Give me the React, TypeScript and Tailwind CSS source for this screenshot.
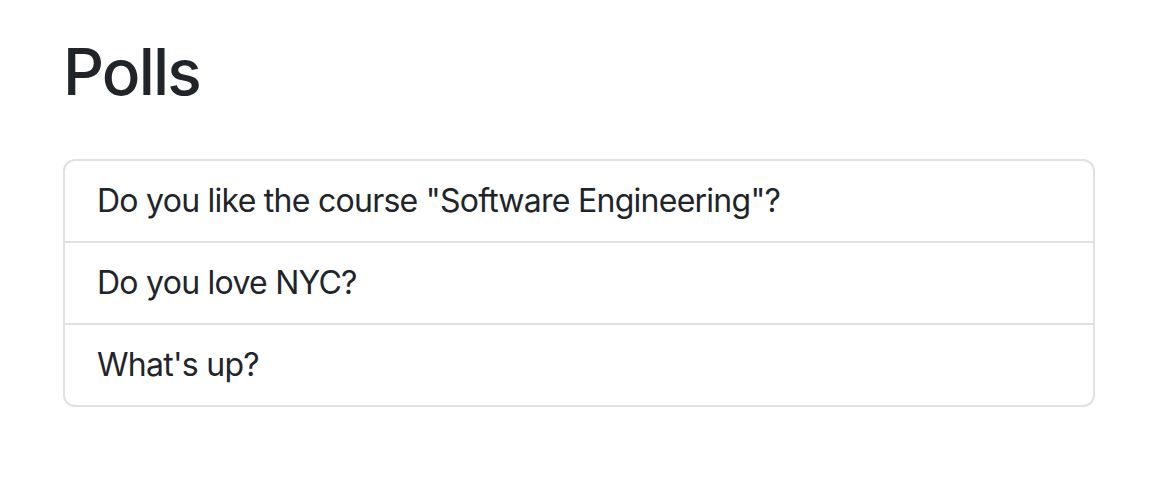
const polls = [
	'Do you like the course "Software Engineering"?',
	"Do you love NYC?",
	"What's up?",
];

export default function App() {
	return (
		<div className="min-h-[492px] bg-white text-[#212529] font-['Inter','Liberation_Sans',sans-serif]">
			<div className="pl-[63px] pt-[34px]">
				<h1 className="text-[64px] font-medium leading-[1.2] tracking-[-1.8px] mb-[48px]">Polls</h1>

				{/* Poll list */}
				<ul className="w-[1032px] border-2 border-[#dee2e6] rounded-[12px]">
					{polls.map((q, i) => (
						<li
							key={q}
							className={`px-[32px] py-[16px] text-[32px] leading-[48px] tracking-[-0.74px] ${
								i > 0 ? "border-t-2 border-[#dee2e6]" : ""
							}`}>
							{q}
						</li>
					))}
				</ul>
			</div>
		</div>
	);
}
